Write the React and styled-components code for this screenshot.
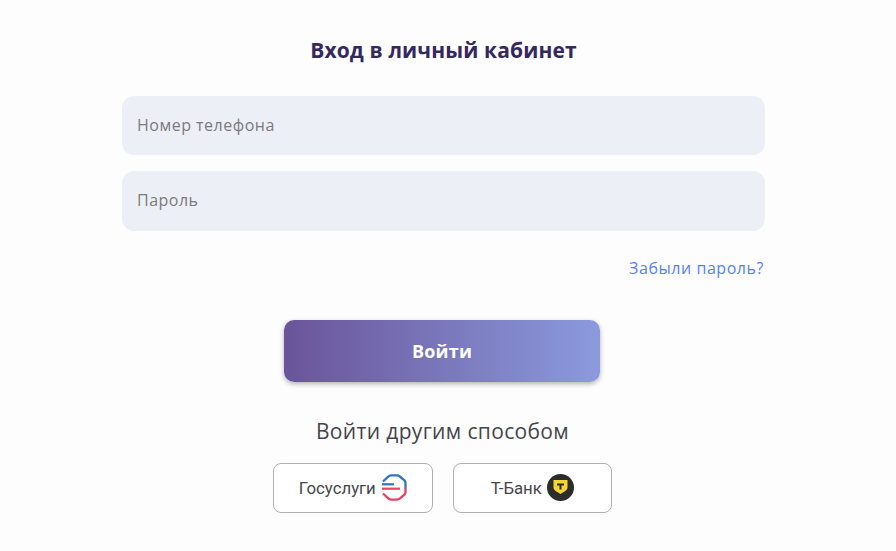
import React from 'react';
import styled, { createGlobalStyle } from 'styled-components';

const GlobalStyle = createGlobalStyle`
  html, body {
    margin: 0;
    padding: 0;
    background: #fdfdfe;
    font-family: 'Open Sans', 'Noto Sans', sans-serif;
  }
`;

const Page = styled.div`
  width: 896px;
  height: 551px;
  overflow: hidden;
  display: flex;
  flex-direction: column;
  align-items: center;
  box-sizing: border-box;
  padding: 35px 9px 0 0;
`;

const Title = styled.h1`
  margin: 0 0 30.7px;
  font-size: 21px;
  line-height: 30px;
  letter-spacing: 0.13px;
  font-weight: 700;
  color: #35285f;
`;

const Form = styled.form`
  width: 643px;
  display: flex;
  flex-direction: column;
  gap: 16px;
`;

const Field = styled.input`
  height: 59.5px;
  box-sizing: border-box;
  width: 100%;
  border: none;
  outline: none;
  border-radius: 12px;
  background: #edeff7;
  padding: 0 15px 1px;
  font-family: 'Open Sans', sans-serif;
  font-size: 16px;
  letter-spacing: 0.5px;
  color: #333;

  &::placeholder {
    color: #7a7a7a;
    opacity: 1;
  }
`;

const ForgotRow = styled.div`
  width: 643px;
  box-sizing: border-box;
  margin-top: 27px;
  padding-right: 1px;
  display: flex;
  justify-content: flex-end;
`;

const ForgotLink = styled.a`
  font-size: 16px;
  line-height: 20px;
  letter-spacing: 0.55px;
  color: #5c7ef5;
  text-decoration: none;
`;

const SubmitButton = styled.button`
  width: 316px;
  height: 62px;
  margin: 42px 3px 0 0;
  padding: 1px 0 0;
  border: none;
  border-radius: 10px;
  background: linear-gradient(90deg, #6a5499 0%, #8b9ade 100%);
  box-shadow: 0 2px 5px rgba(0, 0, 0, 0.3);
  color: #fff;
  font-family: 'Open Sans', sans-serif;
  font-size: 18px;
  letter-spacing: 0.2px;
  font-weight: 700;
  cursor: pointer;
`;

const OtherTitle = styled.div`
  margin: 34px 2px 0 0;
  font-size: 21px;
  line-height: 30px;
  letter-spacing: 0.35px;
  color: #45454b;
`;

const Providers = styled.div`
  margin: 17px 2px 0 0;
  display: flex;
  gap: 20px;
`;

const ProviderButton = styled.button`
  width: 159.5px;
  height: 50px;
  padding: 0;
  box-sizing: border-box;
  display: flex;
  align-items: center;
  justify-content: center;
  gap: 5px;
  background: #fff;
  border: 1px solid #b0b0b4;
  border-radius: 8px;
  font-family: Roboto, sans-serif;
  font-size: 16.8px;
  color: #45464c;
  cursor: pointer;
`;

function GosuslugiIcon() {
  return (
    <svg width="26" height="27" viewBox="0 0 26 27" fill="none">
      <defs>
        <linearGradient id="gosStroke" x1="0" y1="0" x2="0" y2="27" gradientUnits="userSpaceOnUse">
          <stop offset="0.42" stopColor="#2f74c4" />
          <stop offset="0.62" stopColor="#ea3f5e" />
        </linearGradient>
      </defs>
      <path
        d="M2 7.5 L7 2.8 Q8.5 1.4 10 1.4 H16 Q17.5 1.4 19 2.6 L23.4 6.4 Q24.5 7.5 24.5 9 V18 Q24.5 19.5 23.4 20.6 L19 24.4 Q17.5 25.6 16 25.6 H10 Q8.5 25.6 7 24.2 L2 19.5"
        stroke="url(#gosStroke)"
        strokeWidth="2.3"
      />
      <rect x="1" y="9.2" width="12" height="2.2" fill="#2f74c4" />
      <rect x="1" y="13.6" width="18" height="2.2" fill="#e8455f" />
    </svg>
  );
}

function TBankIcon() {
  return (
    <svg width="27" height="27" viewBox="0 0 27 27">
      <circle cx="13.5" cy="13.5" r="13.5" fill="#2c2c2c" />
      <path d="M6.5 6 H20.5 V13.5 C20.5 16.5 16.5 18 13.5 20 C10.5 18 6.5 16.5 6.5 13.5 Z" fill="#f5d72e" />
      <path d="M10 9.5 H17 V11.4 H14.5 V15.5 H12.5 V11.4 H10 Z" fill="#2c2c2c" />
    </svg>
  );
}

export default function App() {
  return (
    <Page>
      <GlobalStyle />
      <Title>Вход в личный кабинет</Title>
      <Form>
        <Field type="text" placeholder="Номер телефона" />
        <Field type="password" placeholder="Пароль" />
      </Form>
      <ForgotRow>
        <ForgotLink href="#">Забыли пароль?</ForgotLink>
      </ForgotRow>
      <SubmitButton type="button">Войти</SubmitButton>
      <OtherTitle>Войти другим способом</OtherTitle>
      <Providers>
        <ProviderButton type="button">
          Госуслуги
          <GosuslugiIcon />
        </ProviderButton>
        <ProviderButton type="button">
          Т-Банк
          <TBankIcon />
        </ProviderButton>
      </Providers>
    </Page>
  );
}
